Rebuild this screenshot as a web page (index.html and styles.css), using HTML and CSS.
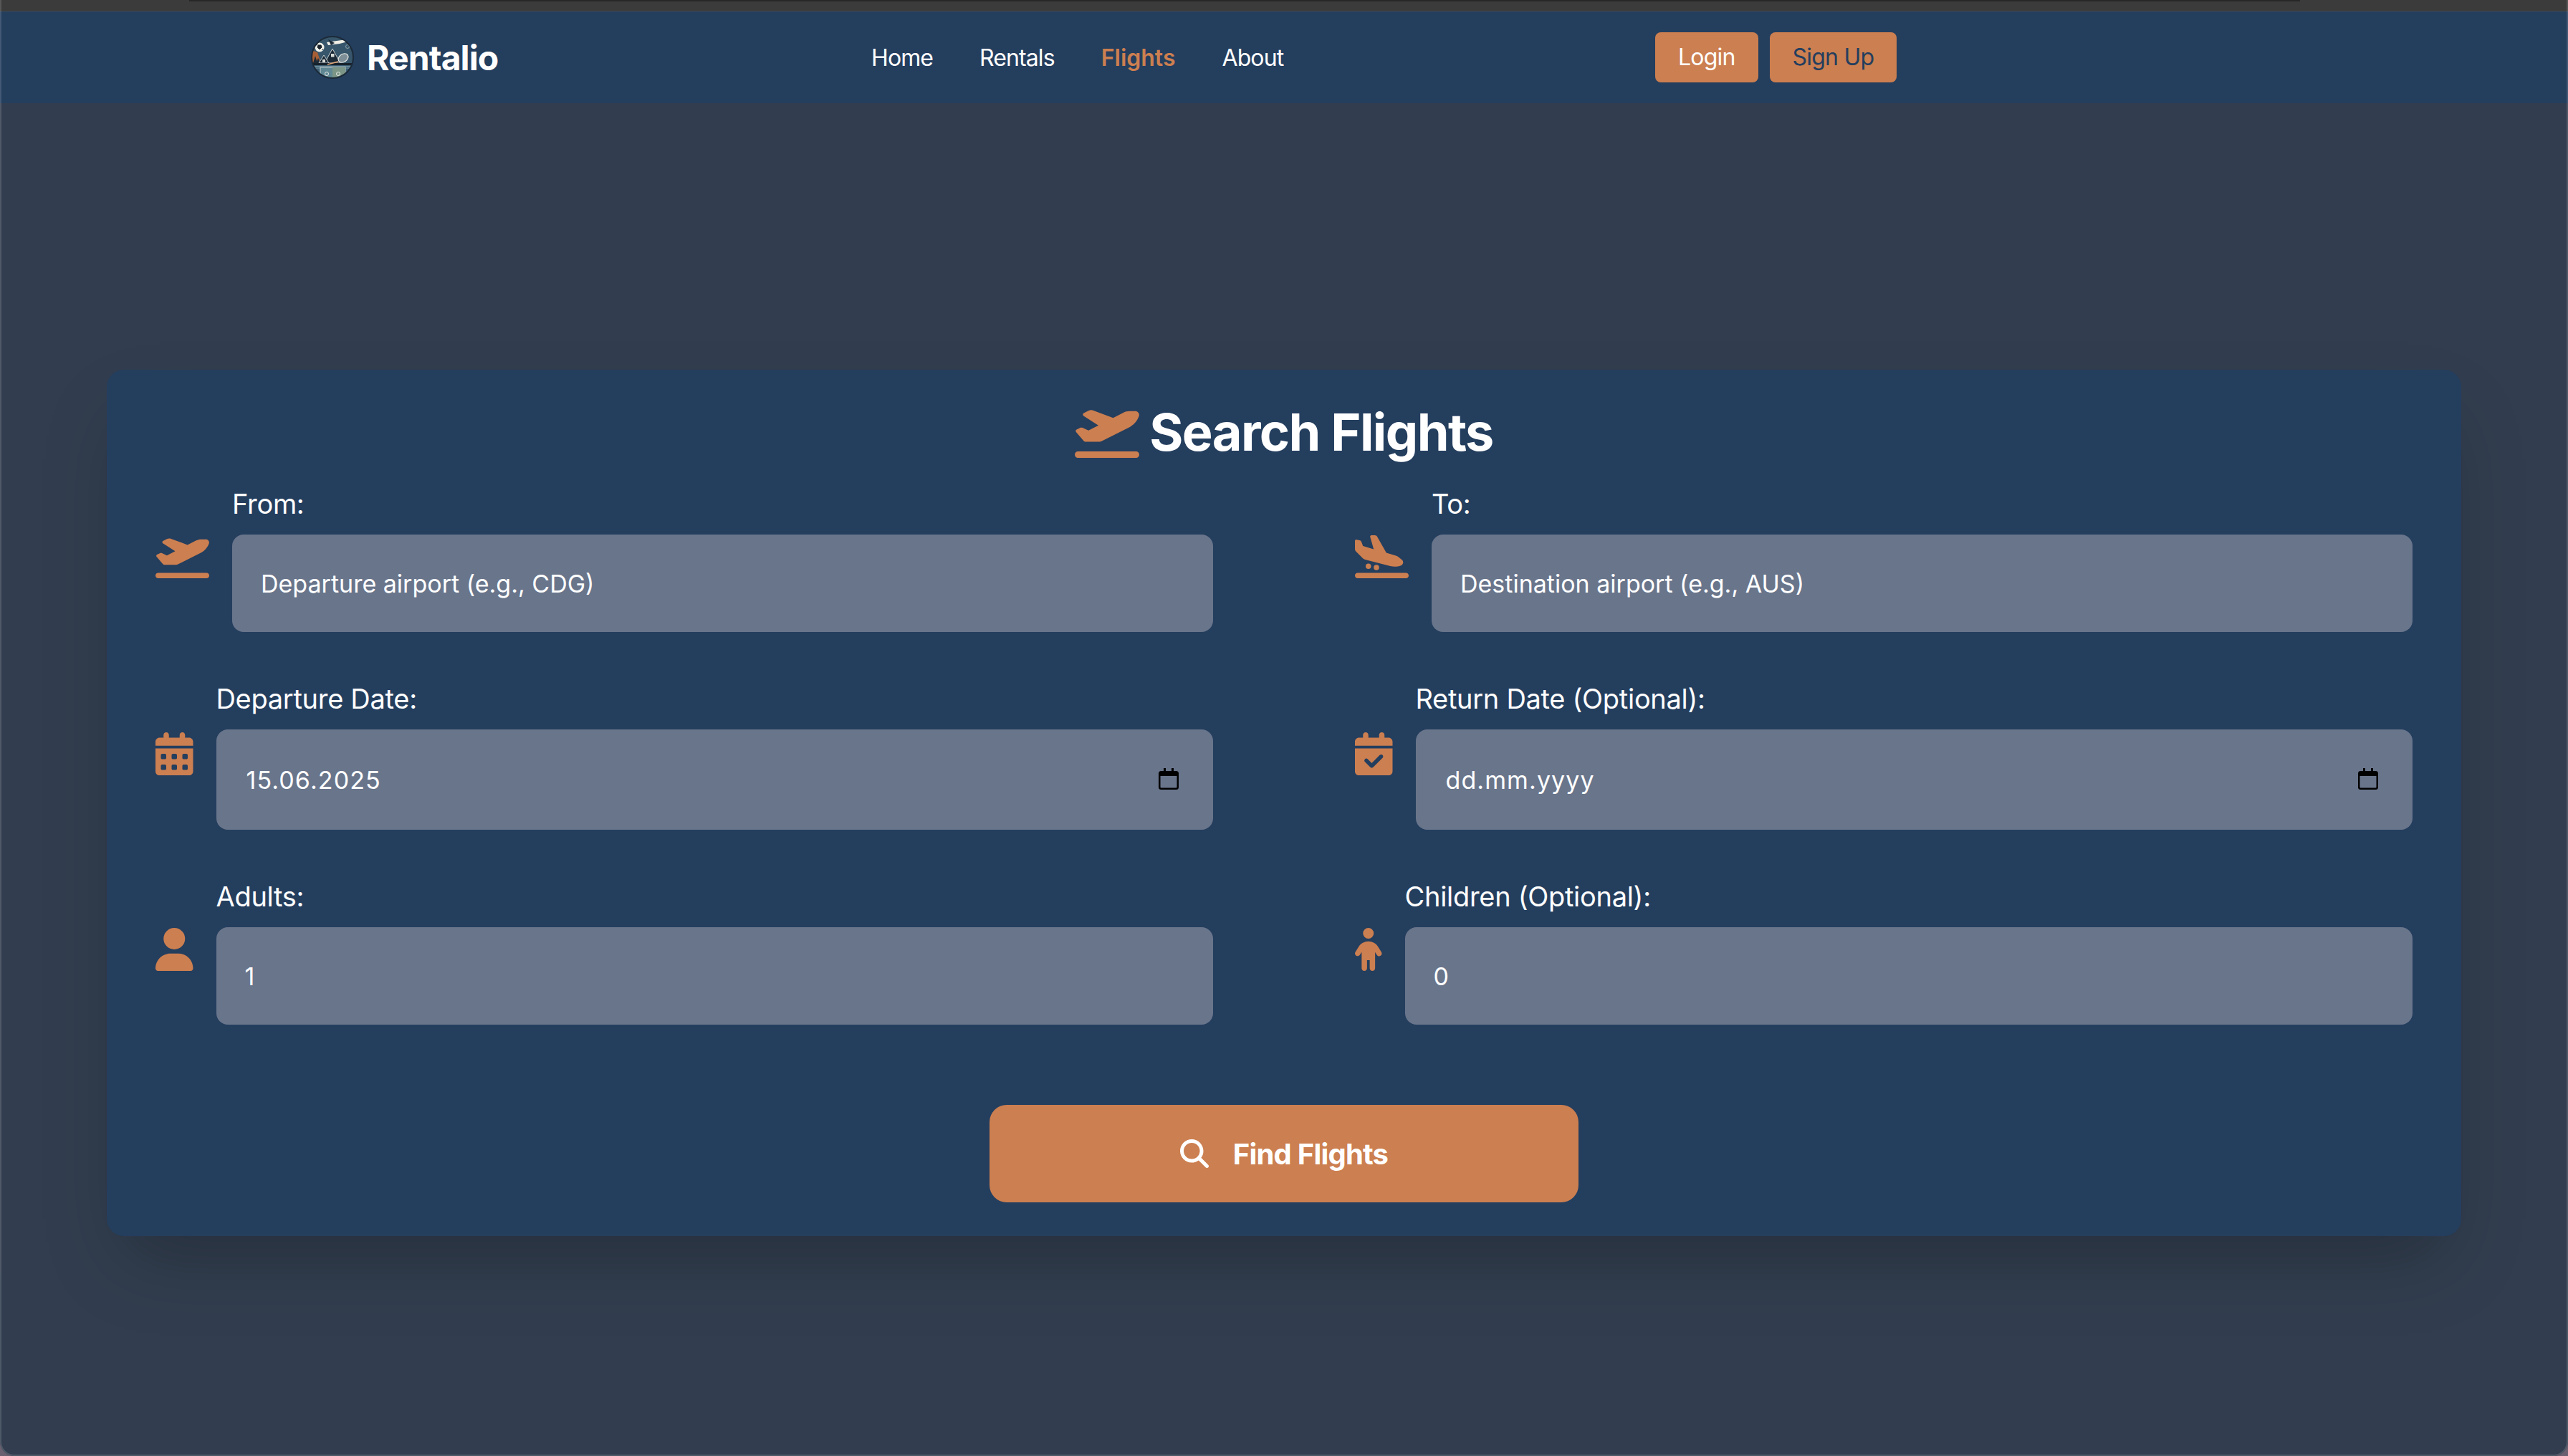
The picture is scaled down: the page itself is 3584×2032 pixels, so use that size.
FILE: index.html
```html
<!DOCTYPE html>
<html lang="en">

<head>
    <meta charset="UTF-8">
    <meta name="viewport" content="width=device-width, initial-scale=1.0">
    <title>Rentalio - Flights</title>
    <link rel="stylesheet" href="styles.css">
</head>

<body>
    <div class="top-strip"><div class="top-strip-bar"></div></div>
    <nav class="navbar">
        <a class="brand" href="#">
            <svg class="brand-logo" viewBox="0 0 60 60">
                <defs><clipPath id="logo-clip"><circle cx="30" cy="30" r="29"/></clipPath></defs>
                <g clip-path="url(#logo-clip)">
                    <rect width="60" height="60" fill="#37566b"/>
                    <path d="M0 20 L9 23 L14 38 L0 38z" fill="#a85f35"/>
                    <path d="M3 38 L6 28 L9 38z M7 38 L10 31 L13 38z" fill="#1d2a36"/>
                    <path d="M19 38 L30 18 L41 38z" fill="#1c2a38" stroke="#c9cfd0" stroke-width="1"/>
                    <path d="M11 38 L18 27 L25 38z" fill="#1c2a38" stroke="#c9cfd0" stroke-width="1"/>
                    <rect x="28" y="25" width="4.500" height="4.500" fill="#d8dcd8"/>
                    <rect x="16" y="33" width="4" height="4" fill="#d8dcd8"/>
                    <rect y="38" width="60" height="3" fill="#17222c"/>
                    <rect y="41" width="60" height="19" fill="#3d6076"/>
                    <path d="M0 42.500h60M0 45h60" stroke="#89a4ad" stroke-width=".8"/>
                    <rect x="13" y="44" width="35" height="17" fill="#5f8794" stroke="#c7d4cf" stroke-width="1"/>
                    <rect x="30" y="44" width="18" height="17" fill="#7b9586"/>
                    <circle cx="22" cy="53" r="2.500" fill="none" stroke="#e4e9e4"/>
                    <circle cx="38" cy="53" r="2.500" fill="none" stroke="#e4e9e4"/>
                    <path d="M22 9 L50 5 L55 7 L40 11 L24 13z" fill="#f1efe6"/>
                    <path d="M24 5 L33 10 L28 13z" fill="#1c2a38"/>
                    <circle cx="12" cy="16" r="6.500" fill="#f1f1ea"/>
                    <path d="M10 13l4 0 1 3-3 3-3-3z M7 11l2 2 M17 20l-2-2" fill="#1b242d" stroke="#1b242d"/>
                    <ellipse cx="45" cy="31" rx="7.500" ry="5.500" transform="rotate(-35 45 31)" fill="#7e8e96" stroke="#e7e9e6" stroke-width="1.200"/>
                    <path d="M38 36 L23 40" stroke="#e0a878" stroke-width="1.800"/>
                    <circle cx="51" cy="15" r="2.500" fill="none" stroke="#9db2bb" stroke-width=".8"/>
                </g>
                <circle cx="30" cy="30" r="29" fill="none" stroke="#1c2a38" stroke-width="2"/>
            </svg>
            <span class="brand-name">Rentalio</span>
        </a>
        <ul class="nav-links">
            <li><a href="#">Home</a></li>
            <li><a href="#">Rentals</a></li>
            <li><a class="active" href="#">Flights</a></li>
            <li><a href="#">About</a></li>
        </ul>
        <div class="nav-actions">
            <a class="nav-btn" href="#">Login</a>
            <a class="nav-btn nav-btn-dark" href="#">Sign Up</a>
        </div>
    </nav>

    <main class="content">
        <section class="search-card">
            <h1 class="search-title">
                <svg class="title-icon" viewBox="0 0 640 512"><path d="M381 114.9L186.1 41.8c-16.7-6.2-35.200-5.300-51.100 2.700L89.100 67.400C78 73 77.200 88.500 87.600 95.200l146.900 94.500L136 240 77.800 214.100c-8.700-3.900-18.800-3.700-27.300 .6L18.300 230.800c-9.300 4.700-11.800 16.800-5 24.700l73.100 85.300c6.100 7.100 15 11.200 24.300 11.200H248.400c5 0 9.900-1.200 14.300-3.400L535.600 212.200c46.500-23.300 82.500-63.300 100.800-112C645.900 75 627.200 48 600.200 48H542.800c-20.200 0-40.200 4.800-58.200 14L381 114.900zM0 480c0 17.700 14.300 32 32 32H608c17.700 0 32-14.300 32-32s-14.300-32-32-32H32c-17.700 0-32 14.300-32 32z"/></svg>
                Search Flights
            </h1>
            <form class="search-grid">
                <div class="field">
                    <svg class="field-icon" viewBox="0 0 640 512"><path d="M381 114.9L186.1 41.8c-16.7-6.2-35.200-5.300-51.100 2.700L89.100 67.400C78 73 77.200 88.500 87.600 95.200l146.900 94.500L136 240 77.800 214.100c-8.700-3.900-18.800-3.700-27.300 .6L18.300 230.800c-9.300 4.700-11.800 16.800-5 24.700l73.100 85.300c6.100 7.100 15 11.200 24.300 11.200H248.400c5 0 9.900-1.200 14.300-3.400L535.600 212.200c46.500-23.300 82.500-63.300 100.800-112C645.900 75 627.200 48 600.200 48H542.800c-20.200 0-40.200 4.800-58.200 14L381 114.900zM0 480c0 17.700 14.300 32 32 32H608c17.700 0 32-14.300 32-32s-14.300-32-32-32H32c-17.700 0-32 14.300-32 32z"/></svg>
                    <div class="field-body">
                        <label for="from">From:</label>
                        <input id="from" type="text" placeholder="Departure airport (e.g., CDG)">
                    </div>
                </div>
                <div class="field">
                    <svg class="field-icon" viewBox="0 0 640 512"><path d="M.3 166.900L0 68C0 57.700 9.500 50.100 19.500 52.300l35.600 7.900c10.600 2.300 19.200 9.900 23 20L96 128l127.300 37.600L181.800 20.400C178.900 10.200 186.600 0 197.200 0h40.100c11.600 0 22.200 6.200 27.900 16.300l109 193.800 107.200 31.700c15.900 4.700 30.800 12.500 43.700 22.800l34.400 27.600c24 19.200 18.100 57.300-10.700 68.200c-41.200 15.600-86.200 18.100-128.800 7L121.700 289.800c-11.100-2.900-21.200-8.700-29.300-16.900L9.500 189.400c-5.900-6-9.300-14-9.300-22.500zM32 448H608c17.700 0 32 14.300 32 32s-14.300 32-32 32H32c-17.700 0-32-14.300-32-32s14.300-32 32-32zm96-80a32 32 0 1 1 64 0 32 32 0 1 1 -64 0zm128-16a32 32 0 1 1 0 64 32 32 0 1 1 0-64z"/></svg>
                    <div class="field-body">
                        <label for="to">To:</label>
                        <input id="to" type="text" placeholder="Destination airport (e.g., AUS)">
                    </div>
                </div>
                <div class="field">
                    <svg class="field-icon field-icon-date" viewBox="0 0 448 512"><path d="M128 0c17.700 0 32 14.300 32 32V64H288V32c0-17.700 14.300-32 32-32s32 14.300 32 32V64h48c26.500 0 48 21.500 48 48v48H0V112C0 85.500 21.500 64 48 64H96V32c0-17.700 14.300-32 32-32zM0 192H448V464c0 26.500-21.500 48-48 48H48c-26.500 0-48-21.500-48-48V192zm64 80v32c0 8.800 7.200 16 16 16h32c8.800 0 16-7.200 16-16V272c0-8.800-7.200-16-16-16H80c-8.800 0-16 7.200-16 16zm128 0v32c0 8.800 7.200 16 16 16h32c8.800 0 16-7.200 16-16V272c0-8.800-7.200-16-16-16H208c-8.800 0-16 7.200-16 16zm144-16c-8.800 0-16 7.200-16 16v32c0 8.800 7.200 16 16 16h32c8.800 0 16-7.200 16-16V272c0-8.800-7.200-16-16-16H336zM64 400v32c0 8.800 7.200 16 16 16h32c8.800 0 16-7.200 16-16V400c0-8.800-7.200-16-16-16H80c-8.800 0-16 7.200-16 16zm144-16c-8.800 0-16 7.200-16 16v32c0 8.800 7.200 16 16 16h32c8.800 0 16-7.200 16-16V400c0-8.800-7.200-16-16-16H208zm128 0c-8.800 0-16 7.200-16 16v32c0 8.800 7.200 16 16 16h32c8.800 0 16-7.200 16-16V400c0-8.800-7.200-16-16-16H336z"/></svg>
                    <div class="field-body">
                        <label for="depart">Departure Date:</label>
                        <div class="date-wrap">
                            <input id="depart" class="date-input" type="text" value="15.06.2025">
                            <svg class="date-icon" viewBox="0 0 28 30"><path d="M7 0h3v4h8V0h3v4h3.500A3.500 3.500 0 0 1 28 7.500v19a3.500 3.500 0 0 1-3.500 3.500h-21A3.500 3.500 0 0 1 0 26.500v-19A3.500 3.500 0 0 1 3.500 4H7zM2.500 11v15.500a1 1 0 0 0 1 1h21a1 1 0 0 0 1-1V11z"/></svg>
                        </div>
                    </div>
                </div>
                <div class="field">
                    <svg class="field-icon field-icon-date" viewBox="0 0 448 512"><path d="M128 0c17.700 0 32 14.300 32 32V64H288V32c0-17.700 14.300-32 32-32s32 14.300 32 32V64h48c26.500 0 48 21.500 48 48v48H0V112C0 85.500 21.500 64 48 64H96V32c0-17.700 14.300-32 32-32zM0 192H448V464c0 26.500-21.500 48-48 48H48c-26.500 0-48-21.500-48-48V192zM329 305c9.400-9.400 9.400-24.600 0-33.900s-24.600-9.400-33.900 0l-95 95-47-47c-9.400-9.400-24.600-9.400-33.900 0s-9.400 24.600 0 33.900l64 64c9.400 9.400 24.600 9.400 33.900 0L329 305z"/></svg>
                    <div class="field-body">
                        <label for="return">Return Date (Optional):</label>
                        <div class="date-wrap">
                            <input id="return" class="date-input" type="text" placeholder="dd.mm.yyyy">
                            <svg class="date-icon" viewBox="0 0 28 30"><path d="M7 0h3v4h8V0h3v4h3.500A3.500 3.500 0 0 1 28 7.500v19a3.500 3.500 0 0 1-3.500 3.500h-21A3.500 3.500 0 0 1 0 26.500v-19A3.500 3.500 0 0 1 3.500 4H7zM2.500 11v15.500a1 1 0 0 0 1 1h21a1 1 0 0 0 1-1V11z"/></svg>
                        </div>
                    </div>
                </div>
                <div class="field">
                    <svg class="field-icon" viewBox="0 0 448 512"><path d="M224 256A128 128 0 1 0 224 0a128 128 0 1 0 0 256zm-45.700 48C79.800 304 0 383.800 0 482.300C0 498.700 13.300 512 29.700 512H418.300c16.400 0 29.700-13.300 29.700-29.700C448 383.800 368.200 304 269.700 304H178.300z"/></svg>
                    <div class="field-body">
                        <label for="adults">Adults:</label>
                        <input id="adults" type="text" value="1">
                    </div>
                </div>
                <div class="field">
                    <svg class="field-icon" viewBox="0 0 320 512"><path d="M96 64a64 64 0 1 1 128 0A64 64 0 1 1 96 64zm48 320v96c0 17.700-14.300 32-32 32s-32-14.300-32-32V287.800L59.100 321c-9.400 15-29.200 19.400-44.100 10S-4.500 301.900 4.900 287l39.900-63.300C69.700 184 113.200 160 160 160s90.300 24 115.200 63.600L315.100 287c9.400 15 4.900 34.700-10 44.100s-34.700 4.900-44.100-10L240 287.800V480c0 17.700-14.300 32-32 32s-32-14.300-32-32V384H144z"/></svg>
                    <div class="field-body">
                        <label for="children">Children (Optional):</label>
                        <input id="children" type="text" value="0">
                    </div>
                </div>
                <div class="search-actions">
                    <button class="search-btn" type="button">
                        <svg class="search-icon" viewBox="0 0 512 512"><path d="M416 208c0 45.900-14.900 88.300-40 122.700L502.600 457.400c12.500 12.500 12.500 32.800 0 45.300s-32.800 12.500-45.300 0L330.700 376c-34.400 25.200-76.800 40-122.700 40C93.100 416 0 322.900 0 208S93.100 0 208 0S416 93.100 416 208zM208 352a144 144 0 1 0 0-288 144 144 0 1 0 0 288z"/></svg>
                        Find Flights
                    </button>
                </div>
            </form>
        </section>
    </main>
</body>

</html>
```

FILE: styles.css
```css
* {
    box-sizing: border-box;
}

html {
    height: 100%;
    background-color: #6b6070;
}

body {
    position: relative;
    height: 100%;
    margin: 0;
    min-height: 2032px;
    display: flex;
    flex-direction: column;
    background-color: #323e4f;
    border-radius: 0 0 20px 20px;
    color: #fff;
    font-family: Inter, "Liberation Sans", sans-serif;
    font-size: 32px;
    overflow: hidden;
}

/* thin light edge of the window, over everything */
body::after {
    content: "";
    position: absolute;
    inset: 0;
    border: 2px solid rgba(255, 255, 255, 0.14);
    border-top: 0;
    border-radius: 0 0 20px 20px;
    pointer-events: none;
}

a {
    color: inherit;
    text-decoration: none;
}

/* window strip above the page */
.top-strip {
    height: 16px;
    flex: none;
    background-color: #3b3b3b;
    border-bottom: 1px solid #46484a;
}

.top-strip-bar {
    width: 2946px;
    height: 2px;
    margin-left: 264px;
    background-color: #272727;
}

.navbar {
    height: 128px;
    flex: none;
    display: flex;
    align-items: center;
    background-color: #243e5e;
    padding-left: 434px;
}

.brand {
    display: flex;
    align-items: center;
    gap: 18px;
    width: 782px;
}

.brand-logo {
    width: 60px;
    height: 60px;
}

.brand-name {
    font-size: 48px;
    font-weight: 700;
    letter-spacing: -0.9px;
}

.nav-links {
    display: flex;
    gap: 65px;
    list-style: none;
    margin: 0;
    padding: 0;
    width: 1094px;
    letter-spacing: -0.9px;
}

.nav-links .active {
    color: #cc7f50;
    font-weight: 600;
    letter-spacing: 0;
}

.nav-actions {
    display: flex;
    gap: 16px;
    letter-spacing: -0.8px;
}

.nav-btn {
    display: block;
    height: 70px;
    line-height: 70px;
    padding: 0 32px;
    background-color: #cc7f50;
    border-radius: 8px;
}

.nav-btn-dark {
    color: #243e5e;
}

.content {
    flex: 1;
    padding: 372px 149px 0;
}

.search-card {
    height: 1209px;
    padding: 43px 68px 0;
    background-color: #243e5e;
    border-radius: 24px;
    box-shadow: 0 50px 100px -24px rgba(0, 0, 0, 0.25);
}

.search-title {
    display: flex;
    justify-content: center;
    align-items: center;
    gap: 14px;
    height: 88px;
    margin: 0 0 29px;
    font-size: 72px;
    font-weight: 700;
    line-height: 88px;
    letter-spacing: -1.6px;
}

.title-icon {
    width: 90px;
    height: 72px;
    fill: #cc7f50;
}

.search-grid {
    display: grid;
    grid-template-columns: 1476px 1476px;
    column-gap: 198px;
    row-gap: 66px;
}

.field {
    display: flex;
    gap: 32px;
    align-items: flex-start;
}

.field-icon {
    flex: none;
    height: 60px;
    margin-top: 71px;
    fill: #cc7f50;
}

.field-icon-date {
    margin-top: 74px;
}

.field-body {
    flex: 1;
    min-width: 0;
}

label {
    display: block;
    font-size: 38px;
    line-height: 54px;
    letter-spacing: -0.3px;
    margin-bottom: 16px;
}

input {
    display: block;
    width: 100%;
    height: 136px;
    padding: 0 40px;
    border: 0;
    border-radius: 16px;
    background-color: #69758b;
    color: #fff;
    font-family: inherit;
    font-size: 34px;
    outline: none;
}

input::placeholder {
    color: #fff;
    opacity: 1;
}

.date-wrap {
    position: relative;
}

.date-input {
    height: 140px;
    padding-left: 42px;
    letter-spacing: 1.1px;
}

.date-icon {
    position: absolute;
    right: 48px;
    top: 54px;
    width: 28px;
    height: 30px;
    fill: #000;
}

.search-actions {
    grid-column: 1 / -1;
    display: flex;
    justify-content: center;
    margin-top: 46px;
}

.search-btn {
    display: flex;
    justify-content: center;
    align-items: center;
    gap: 34px;
    width: 822px;
    height: 136px;
    border: 0;
    border-radius: 24px;
    background-color: #cc7f50;
    color: #fff;
    font-family: inherit;
    font-size: 40px;
    font-weight: 700;
    letter-spacing: -0.8px;
}

.search-icon {
    width: 40px;
    height: 40px;
    fill: #fff;
}
```
